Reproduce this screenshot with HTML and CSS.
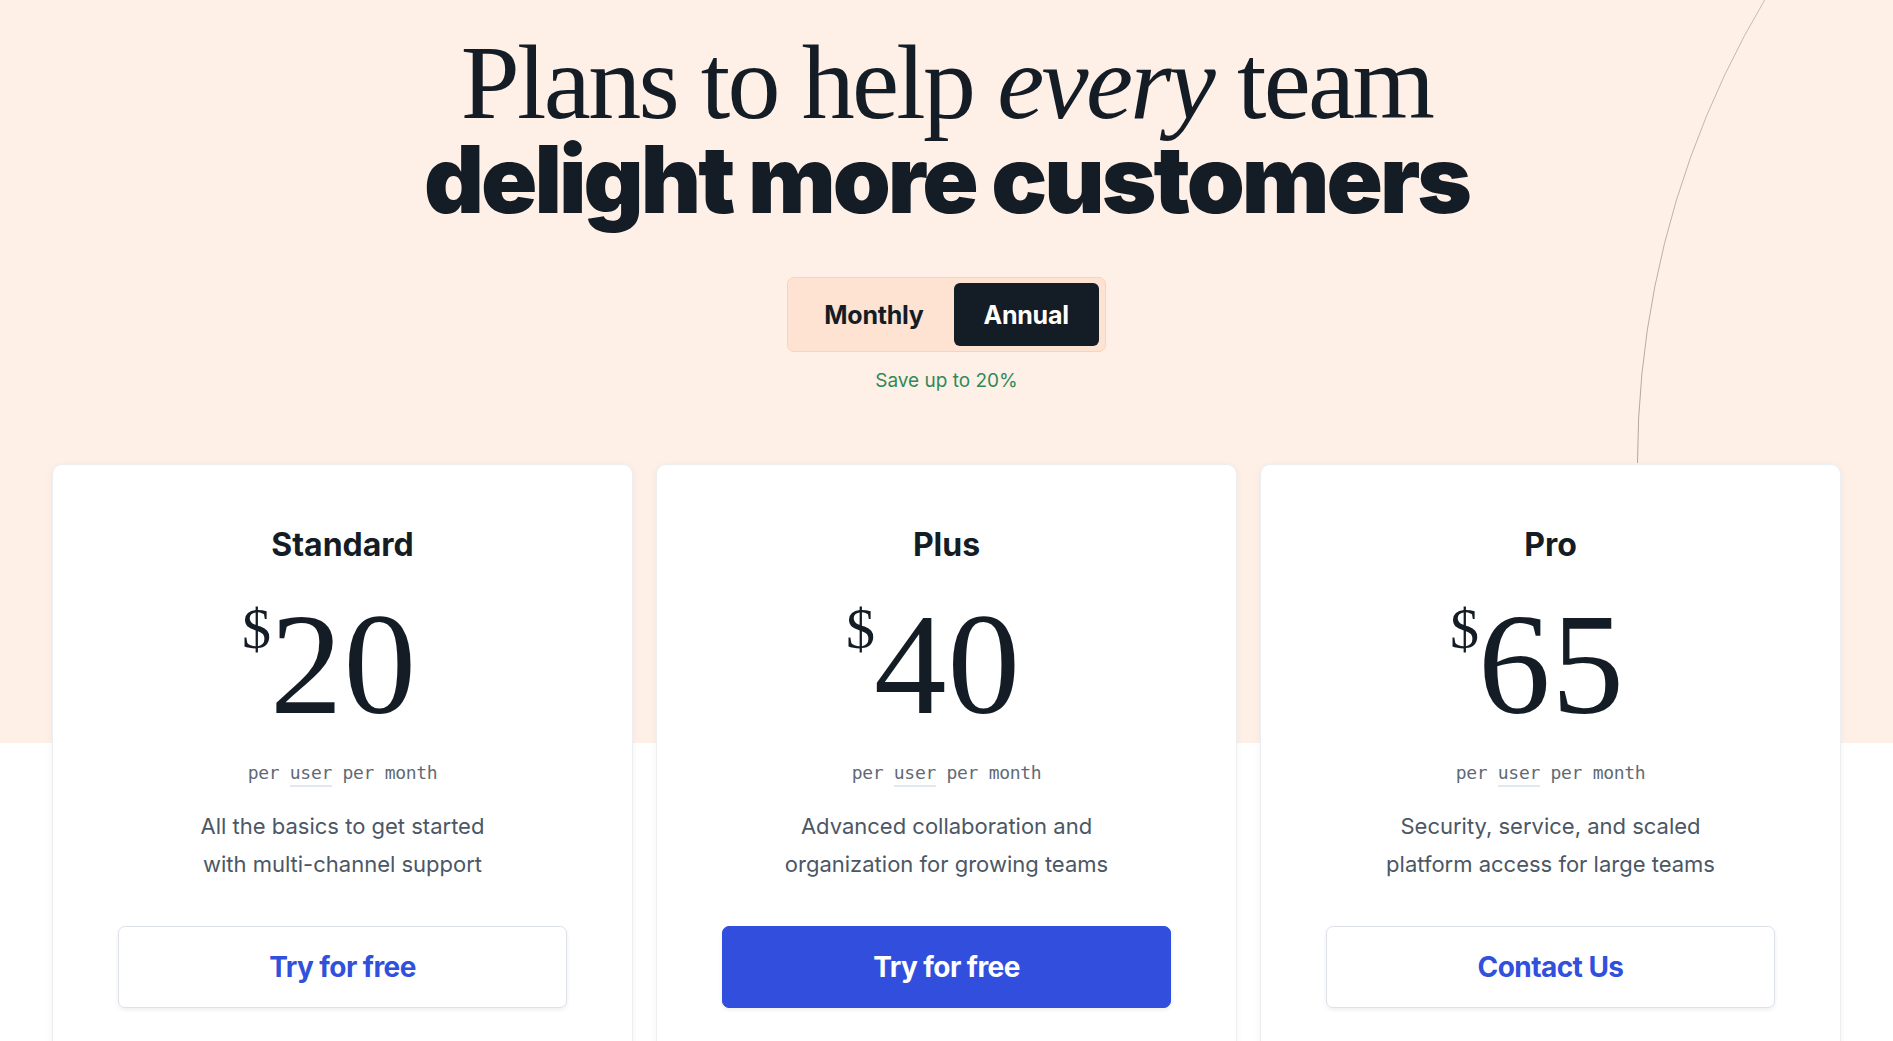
FILE: index.html
```html
<!DOCTYPE html>
<html lang="en">
<head>
    <meta charset="UTF-8">
    <meta name="viewport" content="width=device-width, initial-scale=1.0">
    <title>Pricing - Plans</title>
    <link rel="stylesheet" href="styles.css">
</head>
<body>
    <div class="page">
        <svg class="hero-arc" viewBox="0 0 260 463" width="260" height="463" aria-hidden="true">
            <defs>
                <linearGradient id="arcFade" x1="0" y1="0" x2="0" y2="1">
                    <stop offset="0" stop-color="#b9a79c" stop-opacity="0.5"/>
                    <stop offset="1" stop-color="#6f6059" stop-opacity="0.9"/>
                </linearGradient>
            </defs>
            <circle cx="907.5" cy="463" r="907" fill="none" stroke="url(#arcFade)" stroke-width="1"/>
        </svg>

        <section class="hero">
            <h1 class="title">
                <span class="title-top">Plans to help <em>every</em> team</span>
                <span class="title-bottom">delight more customers</span>
            </h1>

            <div class="billing-toggle">
                <button class="toggle-btn">Monthly</button>
                <button class="toggle-btn active">Annual</button>
            </div>
            <p class="save-note">Save up to 20%</p>
        </section>

        <section class="plans">
            <div class="plan-card">
                <h3 class="plan-name">Standard</h3>
                <div class="price"><span class="currency">$</span>20</div>
                <p class="price-unit">per <span class="unit-term">user</span> per month</p>
                <p class="plan-desc">All the basics to get started<br>with multi-channel support</p>
                <button class="plan-btn">Try for free</button>
            </div>

            <div class="plan-card">
                <h3 class="plan-name">Plus</h3>
                <div class="price"><span class="currency">$</span>40</div>
                <p class="price-unit">per <span class="unit-term">user</span> per month</p>
                <p class="plan-desc">Advanced collaboration and<br>organization for growing teams</p>
                <button class="plan-btn primary-btn">Try for free</button>
            </div>

            <div class="plan-card">
                <h3 class="plan-name">Pro</h3>
                <div class="price"><span class="currency">$</span>65</div>
                <p class="price-unit">per <span class="unit-term">user</span> per month</p>
                <p class="plan-desc">Security, service, and scaled<br>platform access for large teams</p>
                <button class="plan-btn">Contact Us</button>
            </div>
        </section>
    </div>
</body>
</html>
```

FILE: styles.css
```css
body {
    margin: 0;
    font-family: Inter, 'Noto Sans', sans-serif;
    color: #141c25;
    background: #ffffff;
}
.page {
    position: relative;
    min-height: 100vh;
    overflow: hidden;
    background: linear-gradient(to bottom, #fef0e7 0, #fef0e7 743px, #ffffff 743px);
}
.hero-arc {
    position: absolute;
    top: 0;
    left: calc(50% + 690px);
}
.hero {
    position: relative;
    text-align: center;
    padding-top: 34px;
}
.title {
    margin: 0;
    font-weight: normal;
}
.title-top {
    display: block;
    font-family: 'Liberation Serif', 'Times New Roman', serif;
    font-size: 106px;
    line-height: 97px;
    letter-spacing: -2.7px;
    font-weight: 400;
}
.title-top em {
    font-style: italic;
}
.title-bottom {
    display: block;
    font-family: Inter, 'Noto Sans', sans-serif;
    font-size: 93px;
    line-height: 97px;
    font-weight: 900;
    letter-spacing: -0.032em;
}
.billing-toggle {
    display: inline-flex;
    margin-top: 49px;
    padding: 5px 6px;
    background: #fee3d2;
    border: 1px solid #fbd3b7;
    border-radius: 7px;
}
.toggle-btn {
    height: 63px;
    padding: 0 30px;
    border: none;
    border-radius: 6px;
    background: transparent;
    font-family: Inter, sans-serif;
    font-size: 25px;
    font-weight: 700;
    letter-spacing: -0.01em;
    color: #141c25;
    cursor: pointer;
}
.toggle-btn.active {
    background: #141c25;
    color: #ffffff;
}
.save-note {
    margin: 17px 0 0;
    font-size: 19px;
    line-height: 24px;
    color: #2f8a57;
}
.plans {
    position: relative;
    display: grid;
    grid-template-columns: repeat(3, 1fr);
    gap: 23px;
    max-width: 1789px;
    margin: 71px auto 0;
}
.plan-card {
    background: #ffffff;
    border: 1px solid #eceff2;
    border-radius: 10px;
    box-shadow: 0 2px 8px rgba(20, 28, 37, 0.05);
    text-align: center;
    padding: 62px 65px 60px;
}
.plan-name {
    margin: 0;
    font-size: 32px;
    line-height: 36px;
    font-weight: 700;
}
.price {
    position: relative;
    display: inline-block;
    margin-top: 29px;
    padding-left: 2px;
    font-family: 'Liberation Serif', 'Times New Roman', serif;
    font-size: 145px;
    line-height: 145px;
    letter-spacing: 1px;
}
.currency {
    position: absolute;
    top: 8px;
    right: 100%;
    margin-right: -3px;
    font-size: 58px;
    line-height: 58px;
    letter-spacing: 0;
}
.price-unit {
    margin: 24px 0 0;
    font-family: 'DejaVu Sans Mono', 'Liberation Mono', monospace;
    font-size: 18px;
    line-height: 24px;
    letter-spacing: -0.3px;
    color: #5f6a75;
}
.unit-term {
    padding-bottom: 2px;
    border-bottom: 2px solid #e3e8ee;
}
.plan-desc {
    margin: 22px 0 0;
    font-size: 22px;
    line-height: 38px;
    color: #4b5765;
}
.plan-btn {
    display: block;
    width: 100%;
    height: 82px;
    margin-top: 43px;
    background: #ffffff;
    border: 1.5px solid #dde2e8;
    border-radius: 7px;
    box-shadow: 0 2px 4px rgba(20, 28, 37, 0.07);
    font-family: Inter, sans-serif;
    font-size: 28px;
    font-weight: 700;
    letter-spacing: -0.02em;
    color: #3150dc;
    cursor: pointer;
}
.primary-btn {
    background: #314fdc;
    border-color: #314fdc;
    color: #ffffff;
}
```
